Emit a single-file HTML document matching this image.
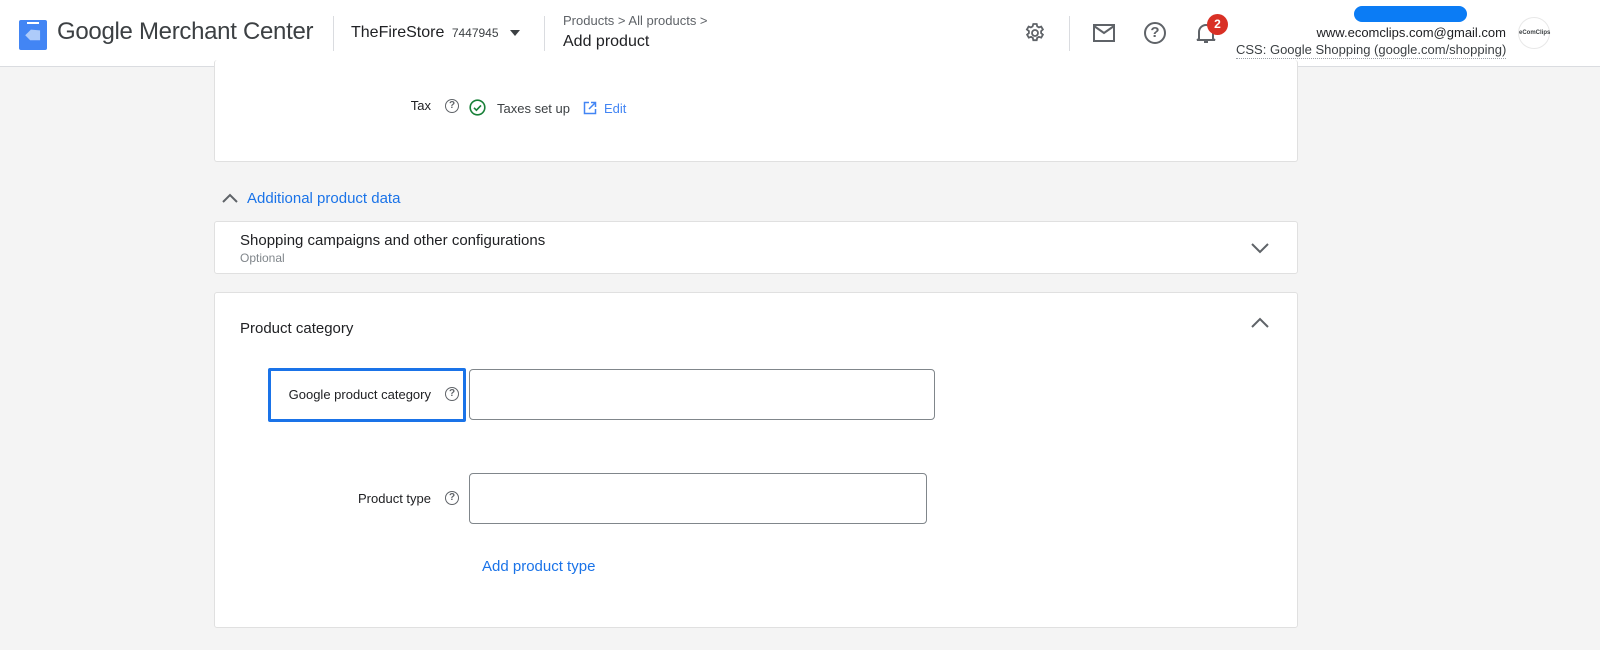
<!DOCTYPE html>
<html><head><style>
*{box-sizing:border-box;margin:0;padding:0}
body{width:1600px;height:650px;overflow:hidden;background:#f4f4f4;font-family:"Liberation Sans",Arial,sans-serif;color:#202124;position:relative}
.hdr{position:absolute;left:0;top:0;width:1600px;height:67px;background:#fff;border-bottom:1px solid #dadce0}
.a{position:absolute}
.card{position:absolute;left:214px;width:1084px;background:#fff;border:1px solid #e0e0e0;border-radius:3px}
.q{position:absolute;width:14px;height:14px;border:1.5px solid #5f6368;border-radius:50%;font-size:10px;line-height:11px;text-align:center;color:#5f6368;font-weight:bold}
.inp{position:absolute;border:1px solid #80868b;border-radius:4px;background:#fff}
.lbl{position:absolute;font-size:13px;color:#202124;text-align:right;white-space:nowrap}
</style></head><body>
<div class="hdr">
 <svg class="a" style="left:19px;top:18px" width="28" height="32" viewBox="0 0 28 32"><rect x="0" y="2" width="28" height="30" rx="2" fill="#4285f4"/><rect x="8" y="4" width="12" height="2" fill="#fff"/><path d="M9 12 l8 0 l6 7 l-7 7 l-7-7z" fill="#aecbfa" transform="rotate(-45 14 18)"/></svg>
 <div class="a" style="left:57px;top:18px;font-size:24px;color:#3c4043;letter-spacing:-0.3px">Google Merchant Center</div>
 <div class="a" style="left:333px;top:16px;width:1px;height:35px;background:#dadce0"></div>
 <div class="a" style="left:351px;top:24px;font-size:16px;color:#202124">TheFireStore <span style="font-size:12px;color:#3c4043;margin-left:3px">7447945</span></div>
 <div class="a" style="left:510px;top:30px;width:0;height:0;border-left:5px solid transparent;border-right:5px solid transparent;border-top:6px solid #3c4043"></div>
 <div class="a" style="left:544px;top:16px;width:1px;height:35px;background:#dadce0"></div>
 <div class="a" style="left:563px;top:13px;font-size:13px;color:#5f6368">Products &gt; All products &gt;</div>
 <div class="a" style="left:563px;top:33px;font-size:16px;color:#202124">Add product</div>
 <svg class="a" style="left:1023px;top:21px" width="24" height="24" viewBox="0 0 24 24"><g fill="none" stroke="#5f6368" stroke-width="1.8"><circle cx="12" cy="12" r="3"/><path d="M10.3 3h3.4l.5 2.4 1.7 1 2.3-.8 1.7 2.9-1.8 1.6v2l1.8 1.6-1.7 2.9-2.3-.8-1.7 1-.5 2.4h-3.4l-.5-2.4-1.7-1-2.3.8-1.7-2.9 1.8-1.6v-2L3.9 8.5l1.7-2.9 2.3.8 1.7-1z"/></g></svg>
 <div class="a" style="left:1069px;top:16px;width:1px;height:35px;background:#dadce0"></div>
 <svg class="a" style="left:1092px;top:22px" width="24" height="22" viewBox="0 0 24 22"><rect x="2" y="3" width="20" height="16" fill="none" stroke="#5f6368" stroke-width="2"/><path d="M2 4l10 7 10-7" fill="none" stroke="#5f6368" stroke-width="2"/></svg>
 <div class="a" style="left:1144px;top:22px;width:22px;height:22px;border:2px solid #5f6368;border-radius:50%;text-align:center;font-size:15px;line-height:18px;color:#5f6368;font-weight:bold">?</div>
 <svg class="a" style="left:1195px;top:21px" width="22" height="24" viewBox="0 0 22 24"><path d="M4 18V11a7 7 0 0114 0v7l2 1H2z" fill="none" stroke="#5f6368" stroke-width="2"/><path d="M9 21h4" stroke="#5f6368" stroke-width="2"/></svg>
 <div class="a" style="left:1207px;top:14px;width:21px;height:21px;background:#d93025;border-radius:50%;color:#fff;font-size:12px;font-weight:bold;text-align:center;line-height:21px">2</div>
 <div class="a" style="left:1354px;top:6px;width:113px;height:16px;border-radius:8px;background:#0b7cf5"></div>
 <div class="a" style="left:1280px;top:25px;width:226px;text-align:right;font-size:13px;color:#202124">www.ecomclips.com@gmail.com</div>
 <div class="a" style="left:1236px;top:42px;width:270px;text-align:right;font-size:13px;color:#3c4043;border-bottom:1px dotted #9aa0a6;padding-bottom:1px;white-space:nowrap">CSS: Google Shopping (google.com/shopping)</div>
 <div class="a" style="left:1518px;top:17px;width:32px;height:32px;border:1px solid #e8e8e8;border-radius:50%;font-size:6px;line-height:30px;text-align:center;color:#3c4043;font-weight:bold">eComClips</div>
</div>

<div class="card" style="top:60px;height:102px;border-top:none">
 <div class="lbl" style="left:182px;top:38px;width:34px">Tax</div>
 <div class="q" style="left:230px;top:39px">?</div>
 <svg class="a" style="left:254px;top:39px" width="17" height="17" viewBox="0 0 17 17"><circle cx="8.5" cy="8.5" r="7.3" fill="none" stroke="#188038" stroke-width="1.6"/><path d="M5 8.8l2.4 2.4 4.6-4.8" fill="none" stroke="#188038" stroke-width="1.6"/></svg>
 <div class="a" style="left:282px;top:41px;font-size:13px;color:#3c4043">Taxes set up</div>
 <svg class="a" style="left:368px;top:41px" width="14" height="14" viewBox="0 0 14 14"><path d="M6 1.5H1.5v11h11V8M8 1.5h4.5V6M12.5 1.5L6 8" fill="none" stroke="#4285f4" stroke-width="1.5"/></svg>
 <div class="a" style="left:389px;top:41px;font-size:13px;color:#4285f4">Edit</div>
</div>

<svg class="a" style="left:221px;top:192px" width="18" height="12" viewBox="0 0 18 12"><path d="M2 10l7-7 7 7" fill="none" stroke="#5f6368" stroke-width="2"/></svg>
<div class="a" style="left:247px;top:190px;font-size:15px;color:#1a73e8">Additional product data</div>

<div class="card" style="top:221px;height:53px">
 <div class="a" style="left:25px;top:10px;font-size:15px;color:#202124">Shopping campaigns and other configurations</div>
 <div class="a" style="left:25px;top:29px;font-size:12px;color:#80868b">Optional</div>
 <svg class="a" style="left:1035px;top:20px" width="20" height="12" viewBox="0 0 20 12"><path d="M2 2l8 8 8-8" fill="none" stroke="#5f6368" stroke-width="2"/></svg>
</div>

<div class="card" style="top:292px;height:336px">
 <div class="a" style="left:25px;top:27px;font-size:15px;color:#202124">Product category</div>
 <svg class="a" style="left:1035px;top:24px" width="20" height="12" viewBox="0 0 20 12"><path d="M2 10l8-8 8 8" fill="none" stroke="#5f6368" stroke-width="2"/></svg>
 <div class="a" style="left:53px;top:75px;width:198px;height:54px;border:3px solid #1a73e8;border-radius:2px"></div>
 <div class="lbl" style="left:64px;top:94px;width:152px">Google product category</div>
 <div class="q" style="left:230px;top:94px">?</div>
 <div class="inp" style="left:254px;top:76px;width:466px;height:51px"></div>
 <div class="lbl" style="left:100px;top:198px;width:116px">Product type</div>
 <div class="q" style="left:230px;top:198px">?</div>
 <div class="inp" style="left:254px;top:180px;width:458px;height:51px"></div>
 <div class="a" style="left:267px;top:265px;font-size:15px;color:#1a73e8">Add product type</div>
</div>
</body></html>
